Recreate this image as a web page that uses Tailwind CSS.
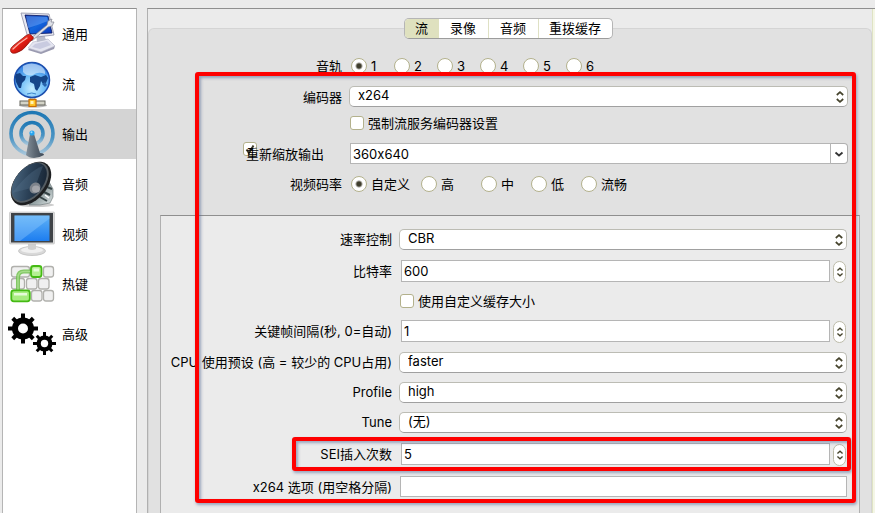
<!DOCTYPE html>
<html lang="zh-CN">
<head>
    <meta charset="UTF-8">
    <meta name="viewport" content="width=device-width, initial-scale=1.0">
    <title>设置 - 输出</title>
    <script src="https://cdn.jsdelivr.net/npm/@tailwindcss/browser@4"></script>
</head>
<body class="flex h-screen overflow-hidden bg-[#ebebeb] pt-2 pl-0.5 font-['Inter','Noto_Sans_CJK_SC',sans-serif] text-[13px] leading-5 text-black [font-variant-ligatures:no-contextual]">

    <!-- Shared arrow glyphs -->
    <svg class="hidden">
        <symbol id="updown" viewBox="0 0 10 14">
            <path d="M1.800 5 5 2.200l3.200 2.800M1.800 9 5 11.800l3.200-2.800" fill="none" stroke="#45432c" stroke-width="1.700"/>
        </symbol>
        <symbol id="down" viewBox="0 0 10 6">
            <path d="M1.500 1.500 5 4.500l3.500-3" fill="none" stroke="#333" stroke-width="1.800"/>
        </symbol>
    </svg>

    <!-- Sidebar -->
    <nav class="w-[135px] shrink-0 border-x border-t border-x-[#b5b5b5] border-t-[#8f8f8f] bg-white">
        <a href="#" class="flex h-[50px] items-center gap-1.5 pl-[5px]">
            <svg class="size-12" viewBox="0 0 48 48">
                <defs>
                    <linearGradient id="scr" x1="0" y1="0" x2="1" y2="1"><stop offset="0" stop-color="#0a2a9c"/><stop offset=".5" stop-color="#1266de"/><stop offset="1" stop-color="#0a35b8"/></linearGradient>
                    <linearGradient id="red" x1="0" y1="0" x2="1" y2="1"><stop offset="0" stop-color="#ff7a68"/><stop offset=".5" stop-color="#e01c12"/><stop offset="1" stop-color="#8e0500"/></linearGradient>
                </defs>
                <path d="M25 34l14-5 8 7-1 3-13 5-13-4z" fill="#9a9ab0"/>
                <path d="M25 32l15-3 7 7-14 6-13-4z" fill="#e4e5f0" stroke="#b8b8ca" stroke-width=".6"/>
                <path d="M27 34l12-3 4 4-11 4-8-2z" fill="#c9cbe0"/>
                <path d="M28 24l8 0 2 6-9 2z" fill="#b9bccb"/>
                <path d="M13 3l28 1 5 21-26 3z" fill="#e8e9f2" stroke="#8e90a6" stroke-width=".8"/>
                <path d="M17 5l23 1 4 17-22 1z" fill="url(#scr)" stroke="#07145c" stroke-width=".8"/>
                <path d="M18 6l21 1 1 4q-10 4-20 7z" fill="#5f9af3" opacity=".6"/>
                <path d="M22 29L39 15l1-4 4-2-1 3 3 0-2 4-4 1-16 14z" fill="#dfe1e8" stroke="#80828f" stroke-width=".7"/>
                <path d="M19 25q3-2 5 1 3 2 0 4-2 1-4 4-5 7-12 9-4 1-5-1-2-3 3-7 5-4 9-7 2-2 4-3z" fill="url(#red)" stroke="#86100a" stroke-width=".7"/>
                <path d="M5 39q6-6 14-11" fill="none" stroke="#ffb0a4" stroke-width="1.300" stroke-linecap="round"/>
            </svg>
            通用
        </a>
        <a href="#" class="flex h-[50px] items-center gap-1.5 pl-[5px]">
            <svg class="size-12" viewBox="0 0 48 48">
                <defs>
                    <radialGradient id="sea" cx=".5" cy=".75" r=".75"><stop offset="0" stop-color="#c4ecff"/><stop offset=".5" stop-color="#6dbcf7"/><stop offset="1" stop-color="#2b78dd"/></radialGradient>
                </defs>
                <ellipse cx="25" cy="45.500" rx="14" ry="2" fill="#bbb"/>
                <rect x="22" y="36" width="5" height="5" fill="#c7c7c2" stroke="#77776f" stroke-width=".6"/>
                <rect x="12" y="41" width="25" height="4" fill="#d4d4c8" stroke="#66665e"/>
                <circle cx="24" cy="20" r="17.500" fill="url(#sea)" stroke="#1d4fae" stroke-width="1.500"/>
                <path d="M8 14l4-1 3 3 3 0-1 4-3 3-1 5-2 0-3-6-1-5z" fill="#123f83"/>
                <path d="M22 17l5-2 6 2 5-2 2 3-2 5-3 1-2-3-1 5-3 5-2-2-1-5-4-2z" fill="#164689"/>
                <path d="M15 6q8-5 18 0 5 4 4 8-7-3-12 1-6 2-10-3z" fill="#fff" opacity=".5"/>
                <path d="M19 34q5-2 9 0" stroke="#3a84cc" fill="none"/>
                <path d="M34 24l3-2 2 3-2 2z" fill="#2863ab"/>
                <rect x="21" y="39.500" width="7" height="7" fill="#ffc629" stroke="#c96e05" stroke-width="1.200"/>
                <rect x="22.500" y="41" width="3" height="3" fill="#fff3b5"/>
            </svg>
            流
        </a>
        <a href="#" class="flex h-[50px] items-center gap-1.5 bg-[#d4d4d4] pl-[5px]">
            <svg class="size-12" viewBox="0 0 48 48">
                <defs>
                    <linearGradient id="wave" x1="0" y1="0" x2="0" y2="1"><stop offset="0" stop-color="#1f78b4"/><stop offset=".6" stop-color="#4a94c4"/><stop offset="1" stop-color="#a9c7db"/></linearGradient>
                    <linearGradient id="cone" x1="0" y1="0" x2="1" y2="0"><stop offset="0" stop-color="#84909a"/><stop offset=".5" stop-color="#5d6873"/><stop offset="1" stop-color="#3f4b58"/></linearGradient>
                </defs>
                <circle cx="24" cy="23.500" r="21" fill="none" stroke="url(#wave)" stroke-width="3.600"/>
                <circle cx="24" cy="23.500" r="11" fill="none" stroke="url(#wave)" stroke-width="3.600"/>
                <path d="M22 24h4l6 19q4 0 4 2-5 3-10 3-5 0-8-3z" fill="url(#cone)"/>
                <circle cx="24" cy="23" r="2.600" fill="#28a4ee"/>
                <circle cx="23.500" cy="22.300" r="1" fill="#9adcff"/>
            </svg>
            输出
        </a>
        <a href="#" class="flex h-[50px] items-center gap-1.5 pl-[5px]">
            <svg class="size-12" viewBox="0 0 48 48">
                <defs>
                    <linearGradient id="spk" x1="0" y1="0" x2="1" y2="1"><stop offset="0" stop-color="#52708a"/><stop offset=".5" stop-color="#2b4157"/><stop offset="1" stop-color="#121d2a"/></linearGradient>
                    <linearGradient id="metal" x1="0" y1="0" x2="1" y2="1"><stop offset="0" stop-color="#eef3f3"/><stop offset=".5" stop-color="#8c9a9c"/><stop offset="1" stop-color="#dfe6e6"/></linearGradient>
                </defs>
                <ellipse cx="28" cy="45" rx="18" ry="2" fill="#ccc"/>
                <path d="M40 20l5 9 0 8-3 6-10 2-11 0z" fill="url(#metal)" stroke="#667072" stroke-width=".6"/>
                <path d="M36 32l6 3M32 37l7 4M39 27l5 2" stroke="#384547" stroke-width="2"/>
                <path d="M37 35l4 3" stroke="#fff" stroke-width="1.500"/>
                <ellipse cx="23" cy="23.500" rx="25" ry="16" transform="rotate(-50 23 23.500)" fill="#1d1f21"/>
                <ellipse cx="22" cy="22.500" rx="23.500" ry="14.500" transform="rotate(-50 22 22.500)" fill="#555d63"/>
                <ellipse cx="21.300" cy="22" rx="22" ry="13.500" transform="rotate(-50 21.300 22)" fill="url(#spk)"/>
                <path d="M4 33L27 27 35 6Q22 10 4 33z" fill="#55738d" opacity=".35"/>
                <ellipse cx="27" cy="28" rx="6" ry="5" transform="rotate(-50 27 28)" fill="#7d838b"/>
                <ellipse cx="28" cy="29" rx="4" ry="3.500" fill="#a3a5aa"/>
            </svg>
            音频
        </a>
        <a href="#" class="flex h-[50px] items-center gap-1.5 pl-[5px]">
            <svg class="size-12" viewBox="0 0 48 48">
                <defs>
                    <linearGradient id="lcd" x1="0" y1="0" x2="0" y2="1"><stop offset="0" stop-color="#5fb2f7"/><stop offset="1" stop-color="#1d7df0"/></linearGradient>
                </defs>
                <ellipse cx="24" cy="41" rx="13.500" ry="4.500" fill="#d9d9d9" stroke="#b9b9b9" stroke-width=".7"/>
                <ellipse cx="24" cy="40" rx="11" ry="3" fill="#f0f0f0"/>
                <path d="M20 33h8v6q-4 2-8 0z" fill="#d0d0d0"/>
                <rect x="1.500" y="2" width="45" height="32" rx="1" fill="#dadada" stroke="#c0c0c0" stroke-width=".6"/>
                <rect x="3" y="3" width="42" height="29.500" fill="#3f4347"/>
                <rect x="6.500" y="5.500" width="35" height="25.500" fill="url(#lcd)"/>
                <path d="M6.500 5.500h35v3L12 31H6.500z" fill="#9bd1ff" opacity=".35"/>
            </svg>
            视频
        </a>
        <a href="#" class="flex h-[50px] items-center gap-1.5 pl-[5px]">
            <svg class="size-12" viewBox="0 0 48 48">
                <g fill="#f0f0f0" stroke="#b0b0ac" stroke-width="1.300">
                    <rect x="3.500" y="6.500" width="18" height="10.500" rx="2.500"/>
                    <rect x="35.500" y="6.500" width="10" height="10.500" rx="2.500"/>
                    <rect x="3.500" y="18.500" width="13" height="10.500" rx="2.500"/>
                    <rect x="18.500" y="18.500" width="10.500" height="10.500" rx="2.500"/>
                    <rect x="30.500" y="18.500" width="10.500" height="10.500" rx="2.500"/>
                    <rect x="23.500" y="30.500" width="10.500" height="10.500" rx="2.500"/>
                    <rect x="35.500" y="30.500" width="10" height="10.500" rx="2.500"/>
                </g>
                <path d="M28 11.500h-12q-6 0-6 6V33" fill="none" stroke="#6fbf4c" stroke-width="4" opacity=".85"/>
                <path d="M28 11.500h-12q-6 0-6 6V33" fill="none" stroke="#a5dc8a" stroke-width="1.500"/>
                <rect x="23" y="6" width="10.500" height="11" rx="2.500" fill="#b5f092" stroke="#45ba14" stroke-width="1.800"/>
                <rect x="3.300" y="30.300" width="18.500" height="11" rx="2.500" fill="#a8ec80" stroke="#45ba14" stroke-width="1.800"/>
                <path d="M6 33h13v2.500H6zM25.500 8.500h5.500v3h-5.500z" fill="#e6fbd9"/>
            </svg>
            热键
        </a>
        <a href="#" class="flex h-[50px] items-center gap-1.5 pl-[5px]">
            <svg class="size-12" viewBox="0 0 48 48">
                <g transform="translate(15 18.500)">
                    <path d="M-2-15h4v30h-4zM-15-2h30v4h-30z"/>
                    <path d="M-2-14.500h4v29h-4zM-14.500-2h29v4h-29z" transform="rotate(45)"/>
                    <circle r="11"/>
                    <circle r="5" fill="#fff"/>
                </g>
                <g transform="translate(36.500 33.500)">
                    <path d="M-1.500-11.500h3v23h-3zM-11.500-1.500h23v3h-23z"/>
                    <path d="M-1.500-11h3v22h-3zM-11-1.500h22v3h-22z" transform="rotate(45)"/>
                    <circle r="8"/>
                    <circle r="3.700" fill="#fff"/>
                </g>
            </svg>
            高级
        </a>
    </nav>

    <!-- Settings panel -->
    <main class="ml-2.5 flex min-w-0 flex-1 border-t border-l border-t-[#8f8f8f] border-l-[#b0b0b0]">
        <section class="mt-[19px] flex min-w-0 flex-1 flex-col rounded-t-md border border-b-0 border-[#d4d4d4] bg-[#e1e1e1] px-[11px]">

            <div class="-mt-[11px] mr-1 flex h-[21px] self-center overflow-hidden rounded-[5px] border border-[#b5b5b5] border-b-[#9c9c9c] bg-white">
                <button class="w-[34px] bg-[#dfe1bf] leading-[19px]">流</button>
                <button class="w-[49px] leading-[19px]">录像</button>
                <button class="w-[50px] border-l border-[#dfe1c4] leading-[19px]">音频</button>
                <button class="w-[74px] border-l border-[#dfe1c4] leading-[19px]">重拨缓存</button>
            </div>

            <div class="mt-4 flex h-[22px] items-center gap-[7px]">
                <span class="w-[182px] text-right">音轨</span>
                <div class="flex pl-0.5">
                    <label class="flex w-[43px] items-center gap-1"><input type="radio" name="track" checked class="size-4 appearance-none rounded-full border border-[#b3b18c] bg-white checked:bg-[radial-gradient(circle,#3f3d2c_2px,#fff_4px)]">1</label>
                    <label class="flex w-[43px] items-center gap-1"><input type="radio" name="track" class="size-4 appearance-none rounded-full border border-[#b3b18c] bg-white">2</label>
                    <label class="flex w-[43px] items-center gap-1"><input type="radio" name="track" class="size-4 appearance-none rounded-full border border-[#b3b18c] bg-white">3</label>
                    <label class="flex w-[43px] items-center gap-1"><input type="radio" name="track" class="size-4 appearance-none rounded-full border border-[#b3b18c] bg-white">4</label>
                    <label class="flex w-[43px] items-center gap-1"><input type="radio" name="track" class="size-4 appearance-none rounded-full border border-[#b3b18c] bg-white">5</label>
                    <label class="flex w-[43px] items-center gap-1"><input type="radio" name="track" class="size-4 appearance-none rounded-full border border-[#b3b18c] bg-white">6</label>
                </div>
            </div>

            <div class="relative flex flex-1 flex-col">
                <div class="flex flex-col gap-2 pt-[9px] pr-3">
                    <div class="flex items-center gap-[7px]">
                        <label for="encoder" class="w-[182px] text-right">编码器</label>
                        <div class="relative flex-1">
                            <select id="encoder" class="block h-[21px] w-full appearance-none rounded-[5px] border border-[#bcbcb4] border-b-[#a0a0a0] bg-white pr-6 pb-[3px] pl-2 leading-4"><option>x264</option></select>
                            <svg class="pointer-events-none absolute top-1 right-[3px] h-3.5 w-2.5"><use href="#updown"/></svg>
                        </div>
                    </div>
                    <label class="ml-[190px] flex h-4 items-center gap-1">
                        <input type="checkbox" class="size-3.5 appearance-none rounded-[3px] border border-[#b3b18c] bg-white">
                        强制流服务编码器设置
                    </label>
                    <div class="mt-1 flex items-center gap-[7px]">
                        <div class="flex w-[182px] justify-end pr-[18px]">
                            <label class="relative">
                                <input type="checkbox" checked class="absolute -top-0.5 -left-[3px] size-3.5 appearance-none rounded-[3px] border border-[#b3b18c] bg-white">
                                <svg class="absolute -top-0.5 -left-[3px] size-3.5" viewBox="0 0 14 14"><path d="M3.500 7.500l2.500 3.500L10.500 3.500" fill="none" stroke="#3f3d2c" stroke-width="2"/></svg>
                                <span class="relative">重新缩放输出</span>
                            </label>
                        </div>
                        <div class="flex h-[21px] flex-1">
                            <input type="text" value="360x640" aria-label="重新缩放输出" class="ml-px min-w-0 flex-1 border border-[#b5b5b5] bg-white px-0.5">
                            <button aria-label="选择分辨率" class="flex w-[17px] items-center justify-center rounded-r-[4px] border border-l-0 border-[#b0b0b0] bg-white"><svg class="h-1.5 w-2.5"><use href="#down"/></svg></button>
                        </div>
                    </div>
                    <div class="mt-0.5 flex items-center gap-[7px]">
                        <span class="w-[182px] text-right">视频码率</span>
                        <div class="flex pl-0.5">
                            <label class="flex w-[70px] items-center gap-1"><input type="radio" name="quality" checked class="size-4 appearance-none rounded-full border border-[#b3b18c] bg-white checked:bg-[radial-gradient(circle,#3f3d2c_2px,#fff_4px)]">自定义</label>
                            <label class="flex w-[60px] items-center gap-1"><input type="radio" name="quality" class="size-4 appearance-none rounded-full border border-[#b3b18c] bg-white">高</label>
                            <label class="flex w-[50px] items-center gap-1"><input type="radio" name="quality" class="size-4 appearance-none rounded-full border border-[#b3b18c] bg-white">中</label>
                            <label class="flex w-[50px] items-center gap-1"><input type="radio" name="quality" class="size-4 appearance-none rounded-full border border-[#b3b18c] bg-white">低</label>
                            <label class="flex items-center gap-1"><input type="radio" name="quality" class="size-4 appearance-none rounded-full border border-[#b3b18c] bg-white">流畅</label>
                        </div>
                    </div>
                </div>

                <!-- Encoder options -->
                <div class="mt-[21px] flex-1 border-x border-t border-x-[#b0b0b0] border-t-[#8f8f8f] bg-[#ebebeb] pt-2 pr-3">
                    <div class="flex h-[30px] items-center gap-[7px]">
                        <label for="rate" class="w-[231px] text-right">速率控制</label>
                        <div class="relative flex-1">
                            <select id="rate" class="block h-[21px] w-full appearance-none rounded-[5px] border border-[#bcbcb4] border-b-[#a0a0a0] bg-white pr-6 pb-[3px] pl-2 leading-4"><option>CBR</option></select>
                            <svg class="pointer-events-none absolute top-1 right-[3px] h-3.5 w-2.5"><use href="#updown"/></svg>
                        </div>
                    </div>
                    <div class="flex h-[33px] items-center gap-[9px]">
                        <label for="bitrate" class="w-[231px] text-right">比特率</label>
                        <div class="flex flex-1 gap-[3px] pr-px">
                            <input id="bitrate" type="text" inputmode="numeric" value="600" class="h-[22px] min-w-0 flex-1 border border-[#b5b5b5] bg-white px-0.5">
                            <button aria-label="调整比特率" class="mt-px -mb-px flex h-[22px] w-[13px] items-center justify-center rounded-full border border-[#bdbcaa] bg-white"><svg class="h-3.5 w-2"><use href="#updown"/></svg></button>
                        </div>
                    </div>
                    <label class="ml-[239px] flex h-[27px] items-center gap-1">
                        <input type="checkbox" class="size-3.5 appearance-none rounded-[3px] border border-[#b3b18c] bg-white">
                        使用自定义缓存大小
                    </label>
                    <div class="flex h-[33px] items-center gap-[9px]">
                        <label for="keyint" class="w-[231px] text-right">关键帧间隔(秒, 0=自动)</label>
                        <div class="flex flex-1 gap-[3px] pr-px">
                            <input id="keyint" type="text" inputmode="numeric" value="1" class="h-[22px] min-w-0 flex-1 border border-[#b5b5b5] bg-white px-0.5">
                            <button aria-label="调整关键帧间隔" class="mt-px -mb-px flex h-[22px] w-[13px] items-center justify-center rounded-full border border-[#bdbcaa] bg-white"><svg class="h-3.5 w-2"><use href="#updown"/></svg></button>
                        </div>
                    </div>
                    <div class="flex h-[30px] items-center gap-[7px]">
                        <label for="preset" class="w-[231px] text-right whitespace-nowrap">CPU 使用预设 (高 = 较少的 CPU占用)</label>
                        <div class="relative flex-1">
                            <select id="preset" class="block h-[21px] w-full appearance-none rounded-[5px] border border-[#bcbcb4] border-b-[#a0a0a0] bg-white pr-6 pb-[3px] pl-2 leading-4"><option>faster</option></select>
                            <svg class="pointer-events-none absolute top-1 right-[3px] h-3.5 w-2.5"><use href="#updown"/></svg>
                        </div>
                    </div>
                    <div class="flex h-[30px] items-center gap-[7px]">
                        <label for="profile" class="w-[231px] text-right">Profile</label>
                        <div class="relative flex-1">
                            <select id="profile" class="block h-[21px] w-full appearance-none rounded-[5px] border border-[#bcbcb4] border-b-[#a0a0a0] bg-white pr-6 pb-[3px] pl-2 leading-4"><option>high</option></select>
                            <svg class="pointer-events-none absolute top-1 right-[3px] h-3.5 w-2.5"><use href="#updown"/></svg>
                        </div>
                    </div>
                    <div class="flex h-[30px] items-center gap-[7px]">
                        <label for="tune" class="w-[231px] text-right">Tune</label>
                        <div class="relative flex-1">
                            <select id="tune" class="block h-[21px] w-full appearance-none rounded-[5px] border border-[#bcbcb4] border-b-[#a0a0a0] bg-white pr-6 pb-[3px] pl-2 leading-4"><option>(无)</option></select>
                            <svg class="pointer-events-none absolute top-1 right-[3px] h-3.5 w-2.5"><use href="#updown"/></svg>
                        </div>
                    </div>
                    <div class="relative flex h-[33px] items-center gap-[9px]">
                        <label for="sei" class="w-[231px] text-right">SEI插入次数</label>
                        <div class="flex flex-1 gap-[3px] pr-px">
                            <input id="sei" type="text" inputmode="numeric" value="5" class="h-[22px] min-w-0 flex-1 border border-[#b5b5b5] bg-white px-0.5">
                            <button aria-label="调整SEI插入次数" class="mt-px -mb-px flex h-[22px] w-[13px] items-center justify-center rounded-full border border-[#bdbcaa] bg-white"><svg class="h-3.5 w-2"><use href="#updown"/></svg></button>
                        </div>
                        <div class="pointer-events-none absolute top-0 -right-1 -bottom-px left-[131px] rounded-[3px] border-4 border-[#fe0000] shadow-[1px_2px_3px_#4a5f9080,inset_2px_2px_3px_#4a5f9080]"></div>
                    </div>
                    <div class="flex h-[33px] items-center gap-2">
                        <label for="x264opts" class="w-[231px] text-right">x264 选项 (用空格分隔)</label>
                        <input id="x264opts" type="text" class="h-[21px] min-w-0 flex-1 border border-[#b5b5b5] bg-white px-0.5">
                    </div>
                </div>

                <!-- Highlight frame round the encoder settings -->
                <div class="pointer-events-none absolute -top-[5px] right-1 left-[35px] h-[431px] rounded-[3px] border-4 border-[#fe0000] shadow-[1px_2px_3px_#4a5f9080,inset_2px_2px_3px_#4a5f9080]"></div>
            </div>
        </section>
        <div class="w-[3px] border-l border-[#dfe3c4] bg-[#f4f6e6]"></div>
    </main>
</body>
</html>
